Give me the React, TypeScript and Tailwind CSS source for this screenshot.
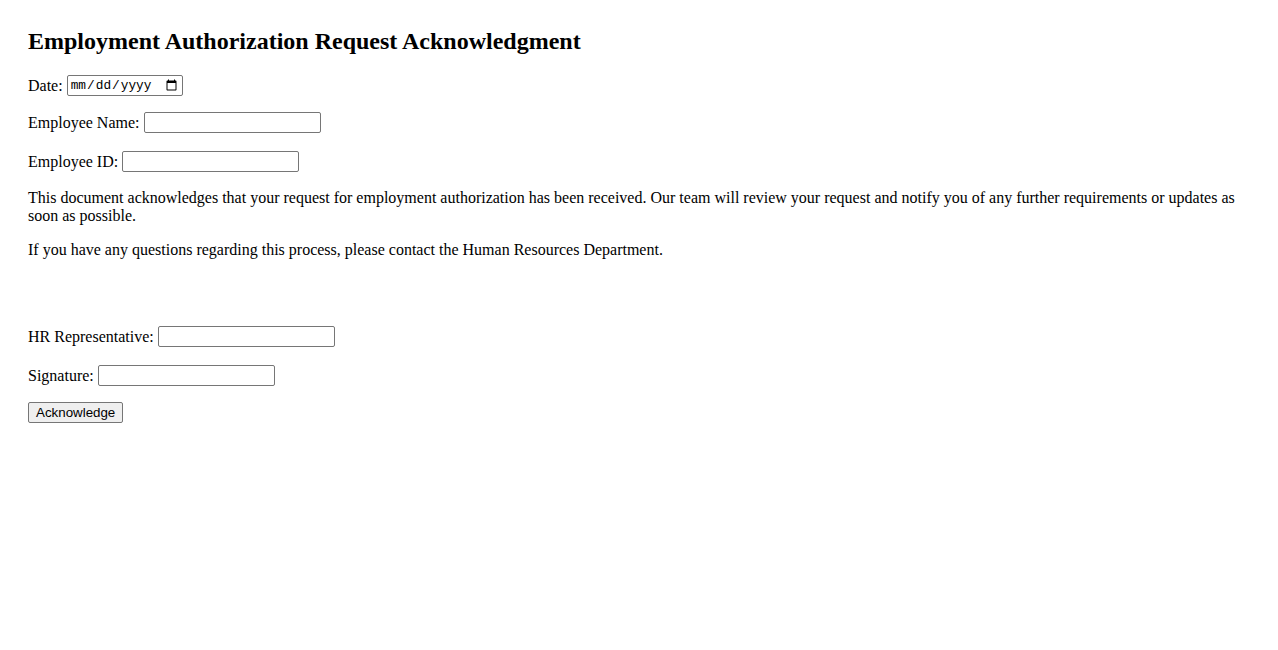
import React from 'react';

const serif = { fontFamily: '"Liberation Serif", "Times New Roman", serif' };

const inputCls =
  'h-[21px] w-[177px] border border-[#767676] rounded-[2px] px-[2px] py-[1px] bg-white text-[13.33px] [font-family:"Liberation_Sans",Arial,sans-serif]';

function Field({ label, className }: { label: string; className: string }) {
  return (
    <div className={`flex h-[21px] items-center gap-[4px] ${className}`}>
      <label className="leading-[18px]">{label}</label>
      <input type="text" className={inputCls} />
    </div>
  );
}

export default function App() {
  return (
    <div className="min-h-screen bg-white text-black px-[28px] pt-[28px] text-[16px]" style={serif}>
      <h2 className="text-[24px] font-bold leading-[27px]">Employment Authorization Request Acknowledgment</h2>

      <div className="mt-[20px] flex h-[21px] items-center gap-[4px]">
        <label className="leading-[18px]">Date:</label>
        <input
          type="date"
          className="h-[21px] w-[116px] border border-[#767676] rounded-[2px] pl-[2px] pr-[2px] bg-white text-[12.8px] [font-family:'Liberation_Mono',monospace]"
        />
      </div>

      <Field label="Employee Name:" className="mt-[16px]" />
      <Field label="Employee ID:" className="mt-[18px]" />

      <p className="mt-[17px] leading-[18px]">
        This document acknowledges that your request for employment authorization has been received. Our team will
        review your request and notify you of any further requirements or updates as soon as possible.
      </p>
      <p className="mt-[16px] leading-[18px]">
        If you have any questions regarding this process, please contact the Human Resources Department.
      </p>

      <Field label="HR Representative:" className="mt-[67px]" />
      <Field label="Signature:" className="mt-[18px]" />

      <div className="mt-[16px] flex">
        <button
          type="button"
          className="h-[21px] px-[7px] border border-[#767676] rounded-[2px] bg-[#efefef] text-[13.33px] leading-none [font-family:'Liberation_Sans',Arial,sans-serif]"
        >
          Acknowledge
        </button>
      </div>
    </div>
  );
}
